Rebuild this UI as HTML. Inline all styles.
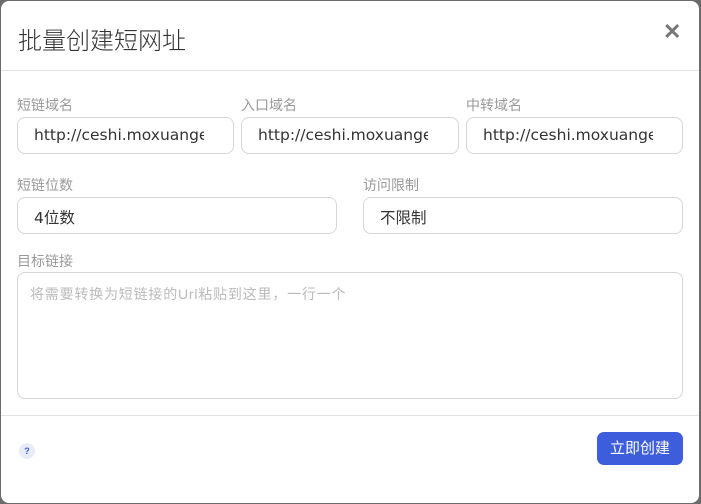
<!DOCTYPE html>
<html><head><meta charset="utf-8"><style>
*{box-sizing:border-box;margin:0;padding:0}
body{width:701px;height:504px;background:#6b6b6b;font-family:"Liberation Sans","Noto Sans CJK SC",sans-serif;position:relative;overflow:hidden}
.m{position:absolute;left:1px;top:1px;width:698px;height:502px;background:#fff;border-radius:8px}
.t{position:absolute;left:17px;top:20px;font-size:24px;color:#333;font-weight:300}
.x{position:absolute;left:662px;top:18px;font-size:22px;color:#777;font-weight:bold}
.hr{position:absolute;left:0;width:698px;height:1px;background:#e3e3e3}
.l{position:absolute;font-size:14px;color:#999}
.i{position:absolute;height:37px;border:1px solid #d6d6d6;border-radius:8px;font-size:15.5px;color:#333;padding:8px 0 0 16px;white-space:nowrap;overflow:hidden;font-family:"DejaVu Sans","Noto Sans CJK SC",sans-serif}
.i span{display:block;overflow:hidden}
.ph{color:#bbb;font-size:14px;letter-spacing:0.8px;font-family:"Liberation Sans","Noto Sans CJK SC",sans-serif}
.btn{position:absolute;left:596px;top:431px;width:86px;height:33px;background:#3d5ddd;color:#fff;border-radius:7px;font-size:15px;text-align:center;line-height:33px}
.q{position:absolute;left:18px;top:442px;width:16px;height:16px;border-radius:50%;background:#e8ecfa;color:#3b5bdb;font-size:9px;font-weight:bold;text-align:center;line-height:16px}
</style></head><body><div class="m">
<div class="t">批量创建短网址</div><div class="x">✕</div>
<div class="hr" style="top:69px"></div>
<div class="l" style="left:16px;top:94px">短链域名</div>
<div class="l" style="left:240px;top:94px">入口域名</div>
<div class="l" style="left:465px;top:94px">中转域名</div>
<div class="i" style="left:16px;top:116px;width:217px"><span style="width:170px">http://ceshi.moxuange</span></div>
<div class="i" style="left:240px;top:116px;width:218px"><span style="width:170px">http://ceshi.moxuange</span></div>
<div class="i" style="left:465px;top:116px;width:217px"><span style="width:170px">http://ceshi.moxuange</span></div>
<div class="l" style="left:16px;top:174px">短链位数</div>
<div class="l" style="left:362px;top:174px">访问限制</div>
<div class="i" style="left:16px;top:196px;width:320px">4位数</div>
<div class="i" style="left:362px;top:196px;width:320px">不限制</div>
<div class="l" style="left:16px;top:250px">目标链接</div>
<div class="i ph" style="left:16px;top:271px;width:666px;height:127px;padding:11px 0 0 12px">将需要转换为短链接的Url粘贴到这里，一行一个</div>
<div class="hr" style="top:414px"></div>
<div class="q">?</div>
<div class="btn">立即创建</div>
</div></body></html>
